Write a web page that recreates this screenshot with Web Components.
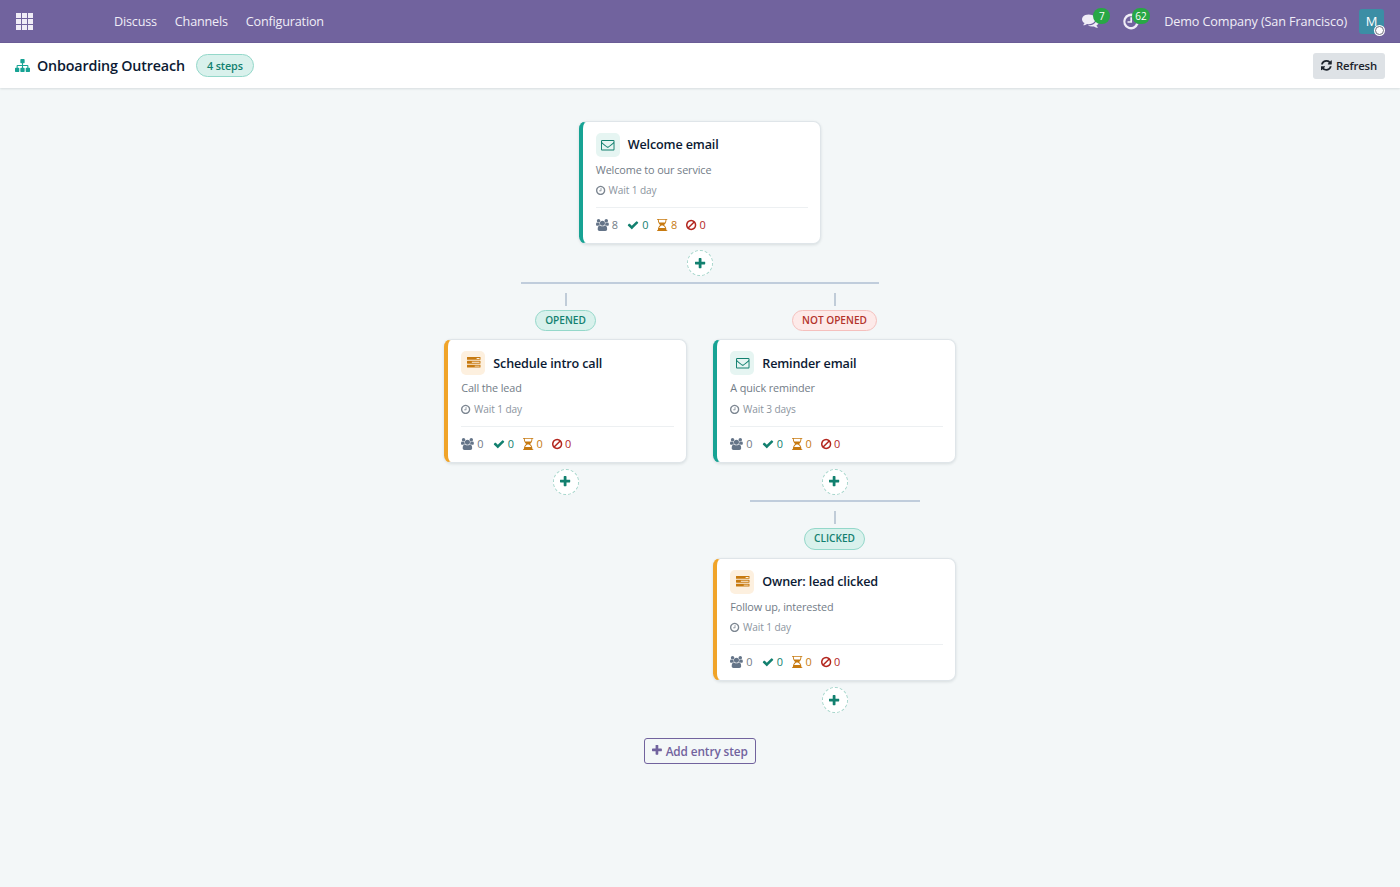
<!DOCTYPE html>
<html lang="en">
<head>
<meta charset="utf-8">
<title>Onboarding Outreach</title>
<style>
    html, body {
        margin: 0;
        height: 100%;
    }
    body {
        font-family: "Open Sans", "Noto Sans", sans-serif;
        background: #f3f7f8;
        overflow: hidden;
    }
</style>
</head>
<body>

<flow-page>
    <nav-bar slot="nav" company="Demo Company (San Francisco)" initial="M" messages="7" activities="62">
        <a>Discuss</a>
        <a>Channels</a>
        <a>Configuration</a>
    </nav-bar>
    <flow-header slot="header" name="Onboarding Outreach" badge="4 steps"></flow-header>

    <flow-step type="email" name="Welcome email" text="Welcome to our service" wait="Wait 1 day" stats="8,0,8,0">
        <flow-step slot="children" label="Opened" type="task" name="Schedule intro call" text="Call the lead" wait="Wait 1 day" stats="0,0,0,0"></flow-step>
        <flow-step slot="children" label="Not opened" tone="danger" type="email" name="Reminder email" text="A quick reminder" wait="Wait 3 days" stats="0,0,0,0">
            <flow-step slot="children" label="Clicked" type="task" name="Owner: lead clicked" text="Follow up, interested" wait="Wait 1 day" stats="0,0,0,0"></flow-step>
        </flow-step>
    </flow-step>
    <entry-button slot="footer">Add entry step</entry-button>
</flow-page>

<script>
// [viewBox, path]
const ICONS = {
    plus: ['192 0 1408 1792', 'M1600 736v192q0 40-28 68t-68 28h-416v416q0 40-28 68t-68 28h-192q-40 0-68-28t-28-68v-416h-416q-40 0-68-28t-28-68v-192q0-40 28-68t68-28h416v-416q0-40 28-68t68-28h192q40 0 68 28t28 68v416h416q40 0 68 28t28 68z'],
    check: ['0 0 1792 1792', 'M1671 566q0 40-28 68l-724 724-136 136q-28 28-68 28t-68-28l-136-136-362-362q-28-28-28-68t28-68l136-136q28-28 68-28t68 28l294 295 656-657q28-28 68-28t68 28l136 136q28 28 28 68z'],
    refresh: ['128 0 1536 1792', 'M1639 1056q0 5-1 7-64 268-268 434.5t-478 166.5q-146 0-282.5-55t-243.5-157l-129 129q-19 19-45 19t-45-19-19-45v-448q0-26 19-45t45-19h448q26 0 45 19t19 45-19 45l-137 137q71 66 161 102t187 36q134 0 250-65t186-179q11-17 53-117 8-23 30-23h192q13 0 22.5 9.5t9.5 22.5zm25-800v448q0 26-19 45t-45 19h-448q-26 0-45-19t-19-45 19-45l138-138q-148-137-349-137-134 0-250 65t-186 179q-11 17-53 117-8 23-30 23h-199q-13 0-22.5-9.5t-9.5-22.5v-7q65-268 270-434.5t480-166.5q146 0 284 55.5t245 156.5l130-129q19-19 45-19t45 19 19 45z'],
    clock: ['128 0 1536 1792', 'M1024 544v448q0 14-9 23t-23 9h-320q-14 0-23-9t-9-23v-64q0-14 9-23t23-9h224v-352q0-14 9-23t23-9h64q14 0 23 9t9 23zm416 352q0-148-73-273t-198-198-273-73-273 73-198 198-73 273 73 273 198 198 273 73 273-73 198-198 73-273zm224 0q0 209-103 385.5t-279.5 279.5-385.5 103-385.5-103-279.5-279.5-103-385.5 103-385.5 279.5-279.5 385.5-103 385.5 103 279.5 279.5 103 385.5z'],
    ban: ['128 0 1536 1792', 'M1440 893q0-161-87-295l-754 753q137 89 297 89 111 0 211.5-43.5t173.5-116.5 116-174.5 43-212.5zm-999 299l755-754q-135-91-300-91-148 0-273 73t-198 199-73 274q0 162 89 299zm1223-299q0 157-61 300t-163.5 246-245 164-298.5 61-298.5-61-245-164-163.5-246-61-300 61-299.5 163.5-245.5 245-164 298.5-61 298.5 61 245 164 163.5 245.5 61 299.5z'],
    email: ['0 0 1792 1792', 'M1664 1504v-768q-32 36-69 66-268 206-426 338-51 43-83 67t-86.5 48.5-102.5 24.5h-2q-48 0-102.5-24.5t-86.5-48.5-83-67q-158-132-426-338-37-30-69-66v768q0 13 9.5 22.5t22.5 9.5h1472q13 0 22.5-9.5t9.5-22.5zm0-1051v-24.5l-.5-13-3-12.5-5.5-9-9-7.5-14-2.5h-1472q-13 0-22.5 9.5t-9.5 22.5q0 168 147 284 193 152 401 317 6 5 35 29.5t46 37.5 44.5 31.5 50.5 27.5 43 9h2q20 0 43-9t50.5-27.5 44.5-31.5 46-37.5 35-29.5q208-165 401-317 54-43 100.5-115.5t46.5-131.5zm128-37v1088q0 66-47 113t-113 47h-1472q-66 0-113-47t-47-113v-1088q0-66 47-113t113-47h1472q66 0 113 47t47 113z'],
    sitemap: ['0 0 1792 1792', 'M1792 1248v320q0 40-28 68t-68 28h-320q-40 0-68-28t-28-68v-320q0-40 28-68t68-28h96v-192h-512v192h96q40 0 68 28t28 68v320q0 40-28 68t-68 28h-320q-40 0-68-28t-28-68v-320q0-40 28-68t68-28h96v-192h-512v192h96q40 0 68 28t28 68v320q0 40-28 68t-68 28h-320q-40 0-68-28t-28-68v-320q0-40 28-68t68-28h96v-192q0-52 38-90t90-38h512v-192h-96q-40 0-68-28t-28-68v-320q0-40 28-68t68-28h320q40 0 68 28t28 68v320q0 40-28 68t-68 28h-96v192h512q52 0 90 38t38 90v192h96q40 0 68 28t28 68z'],
    task: ['0 0 1792 1792', 'M1024 1408h640v-128h-640v128zm-384-512h1024v-128h-1024v128zm640-512h384v-128h-384v128zm512 832v256q0 26-19 45t-45 19h-1664q-26 0-45-19t-19-45v-256q0-26 19-45t45-19h1664q26 0 45 19t19 45zm0-512v256q0 26-19 45t-45 19h-1664q-26 0-45-19t-19-45v-256q0-26 19-45t45-19h1664q26 0 45 19t19 45zm0-512v256q0 26-19 45t-45 19h-1664q-26 0-45-19t-19-45v-256q0-26 19-45t45-19h1664q26 0 45 19t19 45z'],
    users: ['64 0 1920 1792', 'M657 896q-162 5-265 128h-134q-82 0-138-40.5t-56-118.5q0-353 124-353 6 0 43.5 21t97.5 42.5 119 21.5q67 0 133-23-5 37-5 66 0 139 81 256zm1071 637q0 120-73 189.5t-194 69.5h-874q-121 0-194-69.5t-73-189.5q0-53 3.5-103.5t14-109 26.5-108.5 43-97.5 62-81 85.5-53.5 111.5-20q10 0 43 21.5t73 48 107 48 135 21.5 135-21.5 107-48 73-48 43-21.5q61 0 111.5 20t85.5 53.5 62 81 43 97.5 26.5 108.5 14 109 3.5 103.5zm-1024-1277q0 106-75 181t-181 75-181-75-75-181 75-181 181-75 181 75 75 181zm704 384q0 159-112.5 271.5t-271.5 112.5-271.5-112.5-112.5-271.5 112.5-271.5 271.5-112.5 271.5 112.5 112.5 271.5zm576 225q0 78-56 118.5t-138 40.5h-134q-103-123-265-128 81-117 81-256 0-29-5-66 66 23 133 23 59 0 119-21.5t97.5-42.5 43.5-21q124 0 124 353zm-128-609q0 106-75 181t-181 75-181-75-75-181 75-181 181-75 181 75 75 181z'],
    hourglass: ['0 0 1536 1792', 'M1408 128q0 261-106.5 461.5t-266.5 306.5q160 106 266.5 306.5t106.5 461.5h96q14 0 23 9t9 23v64q0 14-9 23t-23 9h-1472q-14 0-23-9t-9-23v-64q0-14 9-23t23-9h96q0-261 106.5-461.5t266.5-306.5q-160-106-266.5-306.5t-106.5-461.5h-96q-14 0-23-9t-9-23v-64q0-14 9-23t23-9h1472q14 0 23 9t9 23v64q0 14-9 23t-23 9h-96zM1280 128h-1024q0 206 85 384h854q85-178 85-384zM1223 1344q-54-141-145.5-241.5t-194.5-142.5h-230q-103 42-194.5 142.5t-145.5 241.5h910z'],
    comments: ['0 0 1792 1792', 'M1408 768q0 139-94 257t-256.5 186.5-353.5 68.5q-86 0-176-16-124 88-278 128-36 9-86 16h-3q-11 0-20.5-8t-11.5-21q-1-3-1-6.5t.5-6.5 2-6l2.5-5 3.5-5.5 4-5 4.5-5 4-4.5q5-6 23-25t26-29.5 22.5-29 25-38.5 20.5-44q-124-72-195-177t-71-224q0-139 94-257t256.5-186.5 353.5-68.5 353.5 68.5 256.5 186.5 94 257zm384 256q0 120-71 224.5t-195 176.5q10 24 20.5 44t25 38.5 22.5 29 26 29.5 23 25q1 1 4 4.5t4.5 5 4 5 3.5 5.5l2.5 5 2 6 .5 6.5-1 6.5q-3 14-13 22t-22 7q-50-7-86-16-154-40-278-128-90 16-176 16-271 0-472-132 58 4 88 4 161 0 309-45t264-129q125-92 192-212t67-254q0-77-23-152 129 71 204 178t75 230z'],
    activity: ['0 0 1792 1792', 'M1340 160A830 830 0 1 0 1740 1170L1480 1070A570 570 0 1 1 1180 400ZM880 440h180v600h-480v-170h300z'],
    apps: ['0 0 17 17', 'M0 0h5v5h-5zM6 0h5v5h-5zM12 0h5v5h-5zM0 6h5v5h-5zM6 6h5v5h-5zM12 6h5v5h-5zM0 12h5v5h-5zM6 12h5v5h-5zM12 12h5v5h-5z']
};

// font-size sets the icon height, width follows the viewBox
class UiIcon extends HTMLElement {
    constructor() {
        super();
        this.attachShadow({ mode: 'open' });
    }
    connectedCallback() {
        const [box, path] = ICONS[this.getAttribute('name')];
        this.shadowRoot.innerHTML = `
            <style>
                :host { display: inline-flex; flex: none; }
                svg { height: 1em; width: auto; fill: currentColor; display: block; overflow: visible; }
            </style>
            <svg viewBox="${box}"><path d="${path}"/></svg>
        `;
    }
}
customElements.define('ui-icon', UiIcon);

class NavBar extends HTMLElement {
    constructor() {
        super();
        this.attachShadow({ mode: 'open' });
    }
    connectedCallback() {
        this.shadowRoot.innerHTML = `
            <style>
                :host {
                    display: flex;
                    align-items: center;
                    height: 43px;
                    box-sizing: border-box;
                    padding: 0 16px;
                    background: #71639e;
                    border-bottom: 1px solid #6b5d98;
                    color: #f0edf7;
                    font-size: 12.65px;
                    letter-spacing: -0.12px;
                    white-space: nowrap;
                }
                .apps { font-size: 17px; margin-right: 81px; }
                .menu { display: flex; gap: 18px; flex: 1; letter-spacing: -0.2px; }
                .tray { display: flex; align-items: center; }
                .item { position: relative; display: flex; }
                .msg { font-size: 17px; margin: -2px 23px 0 0; }
                .act { font-size: 17px; margin-right: 25px; }
                .count {
                    position: absolute;
                    left: 11px;
                    top: -4px;
                    height: 16px;
                    min-width: 17px;
                    box-sizing: border-box;
                    padding: 0 3.5px;
                    border-radius: 8px;
                    background: #28a745;
                    color: #fff;
                    font-size: 10px;
                    line-height: 16px;
                    text-align: center;
                    letter-spacing: 0;
                }
                .act .count { left: 9.5px; top: -5px; }
                .avatar {
                    position: relative;
                    width: 25px;
                    height: 25px;
                    margin-left: 12px;
                    border-radius: 3px;
                    background: #3b8ea5;
                    color: #fff;
                    font-size: 13px;
                    line-height: 25px;
                    text-align: center;
                }
                .status {
                    position: absolute;
                    right: 0;
                    bottom: -1px;
                    width: 7px;
                    height: 7px;
                    border-radius: 50%;
                    background: #fff;
                    border: 1px solid #71717f;
                    box-shadow: 0 0 0 1px #fff;
                }
            </style>
            <ui-icon class="apps" name="apps"></ui-icon>
            <div class="menu"><slot></slot></div>
            <div class="tray">
                <div class="item msg"><ui-icon name="comments"></ui-icon><span class="count">${this.getAttribute('messages')}</span></div>
                <div class="item act"><ui-icon name="activity"></ui-icon><span class="count">${this.getAttribute('activities')}</span></div>
                <span>${this.getAttribute('company')}</span>
                <div class="avatar">${this.getAttribute('initial')}<i class="status"></i></div>
            </div>
        `;
    }
}
customElements.define('nav-bar', NavBar);

class FlowHeader extends HTMLElement {
    constructor() {
        super();
        this.attachShadow({ mode: 'open' });
    }
    connectedCallback() {
        this.shadowRoot.innerHTML = `
            <style>
                :host {
                    display: flex;
                    align-items: center;
                    height: 45px;
                    box-sizing: border-box;
                    padding: 0 15px;
                    background: #fff;
                    box-shadow: 0 1px 2px rgba(15, 40, 50, 0.12);
                    font-weight: 600;
                    white-space: nowrap;
                    position: relative;
                }
                .tree { font-size: 15px; color: #17a394; margin-right: 7px; }
                .name { font-size: 14.3px; letter-spacing: -0.16px; color: #0c1a33; }
                .badge {
                    margin-left: 11px;
                    height: 23px;
                    line-height: 21px;
                    box-sizing: border-box;
                    padding: 0 10px;
                    border: 1px solid #94d8ca;
                    border-radius: 12px;
                    background: #d9f1ec;
                    color: #12806f;
                    font-size: 10.8px;
                    letter-spacing: -0.1px;
                }
                button {
                    display: flex;
                    align-items: center;
                    gap: 4px;
                    margin-left: auto;
                    height: 26px;
                    padding: 0 8px;
                    border: 0;
                    border-radius: 3px;
                    background: #dee2e6;
                    color: #1b222b;
                    font: inherit;
                    font-size: 11.3px;
                    letter-spacing: -0.13px;
                }
                button ui-icon { font-size: 12.6px; }
            </style>
            <ui-icon class="tree" name="sitemap"></ui-icon>
            <span class="name">${this.getAttribute('name')}</span>
            <span class="badge">${this.getAttribute('badge')}</span>
            <button><ui-icon name="refresh"></ui-icon>Refresh</button>
        `;
    }
}
customElements.define('flow-header', FlowHeader);

class StepCard extends HTMLElement {
    constructor() {
        super();
        this.attachShadow({ mode: 'open' });
    }
    connectedCallback() {
        const [total, done, pending, rejected] = this.getAttribute('stats').split(',');
        const type = this.getAttribute('type');

        this.shadowRoot.innerHTML = `
            <style>
                :host {
                    --accent: #17a394;
                    --tint: #e6f5f2;
                    --ink: #12806f;
                    display: block;
                    width: 242.5px;
                    height: 123.5px;
                    box-sizing: border-box;
                    padding: 11px 12px 0 13px;
                    border: 1px solid #dfe5e9;
                    border-left: 4px solid var(--accent);
                    border-radius: 7.5px;
                    background: #fff;
                    box-shadow: 0 1px 3px rgba(15, 40, 50, 0.12);
                    white-space: nowrap;
                }
                :host([type="task"]) {
                    --accent: #f0a429;
                    --tint: #fdf0df;
                    --ink: #c77a10;
                }
                .head { display: flex; align-items: center; gap: 8px; height: 24px; }
                .type {
                    display: flex;
                    align-items: center;
                    justify-content: center;
                    width: 24px;
                    height: 24px;
                    border-radius: 5px;
                    background: var(--tint);
                    color: var(--ink);
                    font-size: 13.5px;
                }
                .name { font-size: 12.6px; font-weight: 600; letter-spacing: -0.15px; color: #0c1a33; }
                .text { margin-top: 5px; font-size: 10.85px; line-height: 16px; letter-spacing: -0.12px; color: #727c87; }
                .wait {
                    display: flex;
                    align-items: center;
                    gap: 3.5px;
                    margin-top: 5.5px;
                    font-size: 10.1px;
                    line-height: 15px;
                    letter-spacing: -0.1px;
                    color: #8b949e;
                }
                .wait ui-icon { font-size: 10.8px; color: #7c8691; }
                .stats {
                    display: flex;
                    gap: 9px;
                    margin-top: 9px;
                    padding-top: 9px;
                    border-top: 1px solid #edf0f2;
                    font-size: 10.9px;
                    line-height: 16px;
                }
                .stats span { display: flex; align-items: center; gap: 3.2px; }
                .stats ui-icon { font-size: 12px; }
                .total { color: #727c87; }
                .total ui-icon { color: #647488; }
                .done { color: #12806f; }
                .pending { color: #c77a10; }
                .rejected { color: #b3261e; }
            </style>
            <div class="head">
                <div class="type"><ui-icon name="${type}"></ui-icon></div>
                <div class="name">${this.getAttribute('name')}</div>
            </div>
            <div class="text">${this.getAttribute('text')}</div>
            <div class="wait"><ui-icon name="clock"></ui-icon>${this.getAttribute('wait')}</div>
            <div class="stats">
                <span class="total"><ui-icon name="users"></ui-icon>${total}</span>
                <span class="done"><ui-icon name="check"></ui-icon>${done}</span>
                <span class="pending"><ui-icon name="hourglass"></ui-icon>${pending}</span>
                <span class="rejected"><ui-icon name="ban"></ui-icon>${rejected}</span>
            </div>
        `;
    }
}
customElements.define('step-card', StepCard);

// A step with its incoming label, its card and the branches below it
class FlowStep extends HTMLElement {
    constructor() {
        super();
        this.attachShadow({ mode: 'open' });
    }
    connectedCallback() {
        const attr = name => this.getAttribute(name) || '';
        const children = this.querySelectorAll(':scope > flow-step').length;

        this.shadowRoot.innerHTML = `
            <style>
                :host { display: flex; flex-direction: column; align-items: center; }
                .stem { width: 2px; height: 13px; background: #c0ccd8; }
                .label {
                    margin: 4px 0 8px;
                    height: 21.5px;
                    line-height: 19.5px;
                    box-sizing: border-box;
                    padding: 0 9.5px;
                    border: 1px solid #94d8ca;
                    border-radius: 11px;
                    background: #d9f1ec;
                    color: #12806f;
                    font-size: 10.1px;
                    font-weight: 600;
                    letter-spacing: 0;
                    text-transform: uppercase;
                }
                .label.danger { border-color: #f5c0bd; background: #fdeae9; color: #b3332b; }
                .add {
                    display: flex;
                    align-items: center;
                    justify-content: center;
                    width: 26px;
                    height: 26px;
                    box-sizing: border-box;
                    margin-top: 6px;
                    padding: 0;
                    border: 1px dashed #a3d5ca;
                    border-radius: 50%;
                    background: #fff;
                    color: #12806f;
                    font-size: 13px;
                }
                .line { height: 2px; margin: 5.5px 0 9px; background: #c0cddc; }
                .children { display: flex; align-items: flex-start; gap: 26.5px; }
            </style>
            ${attr('label') ? `
            <div class="stem"></div>
            <div class="label ${attr('tone')}">${attr('label')}</div>
            ` : ''}
            <step-card type="${attr('type')}" name="${attr('name')}" text="${attr('text')}" wait="${attr('wait')}" stats="${attr('stats')}"></step-card>
            <button class="add"><ui-icon name="plus"></ui-icon></button>
            ${children ? `
            <div class="line" style="width: ${children > 1 ? 358 : 170}px"></div>
            <div class="children"><slot name="children"></slot></div>
            ` : ''}
        `;
    }
}
customElements.define('flow-step', FlowStep);

class EntryButton extends HTMLElement {
    constructor() {
        super();
        this.attachShadow({ mode: 'open' });
    }
    connectedCallback() {
        this.shadowRoot.innerHTML = `
            <style>
                :host { display: block; }
                button {
                    display: flex;
                    align-items: center;
                    gap: 3.5px;
                    height: 26px;
                    padding: 0 7.5px;
                    border: 1px solid #71639e;
                    border-radius: 3px;
                    background: transparent;
                    color: #71639e;
                    font: inherit;
                    font-size: 11.8px;
                    font-weight: 600;
                    letter-spacing: -0.1px;
                }
                ui-icon { font-size: 12.6px; }
            </style>
            <button><ui-icon name="plus"></ui-icon><slot></slot></button>
        `;
    }
}
customElements.define('entry-button', EntryButton);

class FlowPage extends HTMLElement {
    constructor() {
        super();
        this.attachShadow({ mode: 'open' });
    }
    connectedCallback() {
        this.shadowRoot.innerHTML = `
            <style>
                :host { display: flex; flex-direction: column; height: 100vh; }
                main {
                    flex: 1;
                    display: flex;
                    flex-direction: column;
                    align-items: center;
                    gap: 24.5px;
                    padding-top: 32.7px;
                    background: #f3f7f8;
                }
            </style>
            <slot name="nav"></slot>
            <slot name="header"></slot>
            <main>
                <slot></slot>
                <slot name="footer"></slot>
            </main>
        `;
    }
}
customElements.define('flow-page', FlowPage);
</script>
</body>
</html>
